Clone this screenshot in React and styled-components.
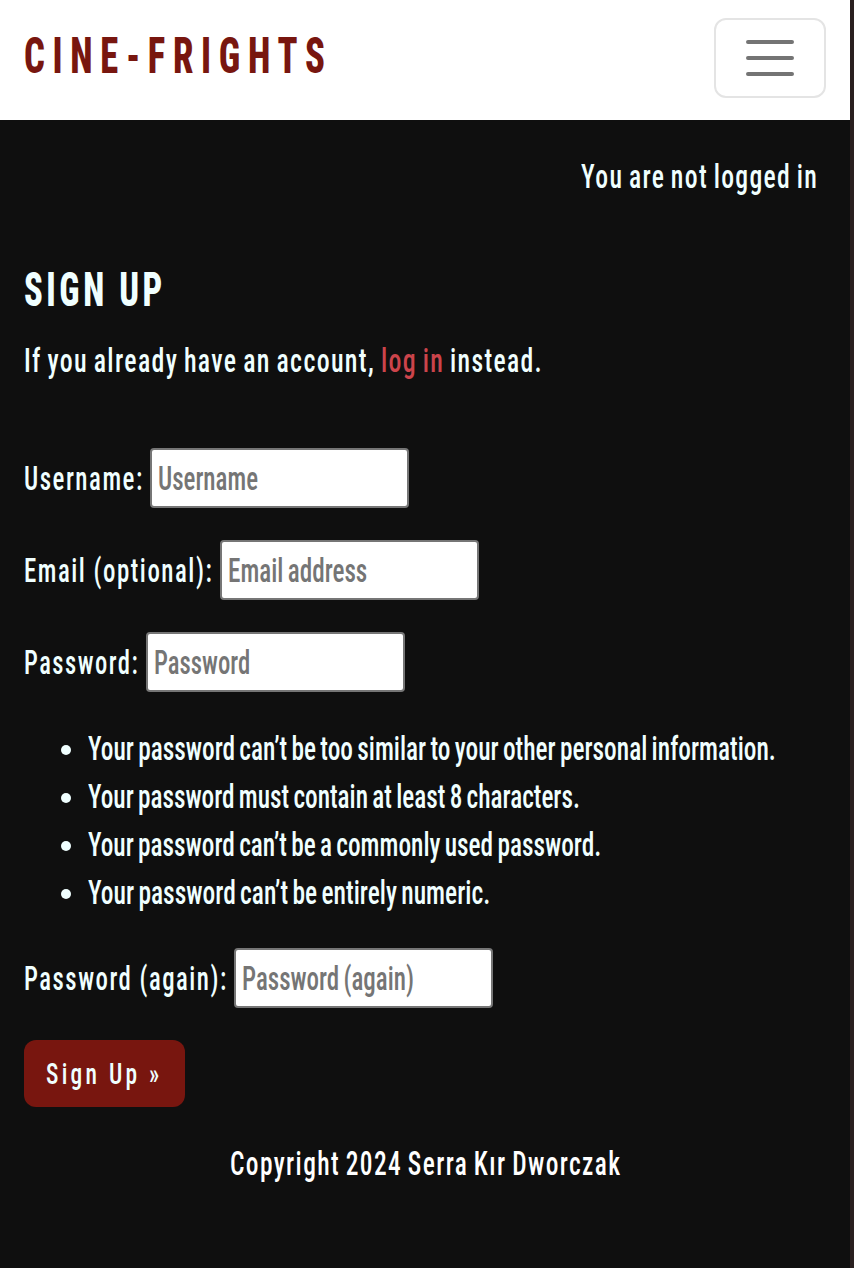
import React, { useLayoutEffect, useRef, useState } from "react";
import styled, { createGlobalStyle } from "styled-components";

const GlobalStyle = createGlobalStyle`
  *, *::before, *::after { box-sizing: border-box; }
  html { background: #2a2020; }
  body {
    margin: 0;
    font-family: Roboto, "Liberation Sans", sans-serif;
    font-size: 33px;
    line-height: 48px;
    color: #f0ffff;
  }
`;

const Page = styled.div`
  width: 850px;
  min-height: 1268px;
  background: #0f0f0f;
  display: flex;
  flex-direction: column;
  overflow: hidden;
`;

const Slot = styled.span`
  display: inline-block;
  white-space: nowrap;
  width: ${(p) => p.$width}px;
  height: 48px;
  vertical-align: top;
`;

const Glyphs = styled.span`
  display: inline-block;
  transform-origin: 0 50%;
  font-stretch: 75%;
  font-weight: ${(p) => p.$weight || 500};
  letter-spacing: ${(p) => p.$spacing || 0}px;
  word-spacing: ${(p) => p.$words || 0}px;
`;

function Condensed({ width, weight, spacing = 0, words = 0, children }) {
  const ref = useRef(null);
  const [scale, setScale] = useState(0.6);
  useLayoutEffect(() => {
    const natural = ref.current.offsetWidth - spacing;
    if (natural > 0) setScale(width / natural);
  }, [width, spacing, words, children]);
  return (
    <Slot $width={width}>
      <Glyphs ref={ref} $weight={weight} $spacing={spacing} $words={words} style={{ transform: `scaleX(${scale})` }}>
        {children}
      </Glyphs>
    </Slot>
  );
}

const Header = styled.header`
  height: 120px;
  padding: 18px 24px 0;
  background: #fff;
  display: flex;
  justify-content: space-between;
  align-items: flex-start;
`;

const Brand = styled.a`
  padding-top: 14px;
  color: #78160f;
  font-size: 50px;
`;

const MenuButton = styled.button`
  width: 112px;
  height: 80px;
  padding: 0;
  border: 2px solid #e4e4e4;
  border-radius: 12px;
  background: #fff;
  display: grid;
  place-items: center;
`;

const Status = styled.p`
  margin: 33px 33px 0 0;
  text-align: right;
`;

const Main = styled.main`
  padding: 0 24px;
`;

const Title = styled.h1`
  margin: 65px 0 0;
  font-size: 49px;
  line-height: 48px;
`;

const Intro = styled.p`
  margin: 23px 0 0;
  display: flex;
  gap: 7px;
`;

const LogInLink = styled.a`
  color: #cc444b;
`;

const Form = styled.form`
  margin-top: 63px;
  display: flex;
  flex-direction: column;
`;

const FieldRow = styled.div`
  display: flex;
  align-items: flex-start;
  gap: 8px;
  height: 60px;
  margin-bottom: ${(p) => p.$after || 32}px;
`;

const Label = styled.label`
  padding-top: 7px;
`;

const FieldBox = styled.div`
  position: relative;
  width: 259px;
  height: 60px;
`;

const Input = styled.input`
  display: block;
  width: 100%;
  height: 100%;
  border: 2px solid #767676;
  border-radius: 4px;
  background: #fff;
`;

const Hint = styled.span`
  position: absolute;
  left: 8px;
  top: 7px;
  color: #757575;
  pointer-events: none;
`;

const Rules = styled.ul`
  margin: 0 0 31px;
  padding: 0;
  list-style: none;
`;

const Rule = styled.li`
  height: 48px;
  padding-left: 37px;
  display: flex;
  align-items: center;
  gap: 17px;
  &::before {
    content: "";
    width: 10px;
    height: 10px;
    margin-top: 2px;
    border-radius: 50%;
    background: #f0ffff;
  }
`;

const Submit = styled.button`
  width: 161px;
  height: 67px;
  padding: 0 0 0 22px;
  border: 0;
  border-radius: 12px;
  background: #78160f;
  color: #f0ffff;
  font: inherit;
  font-size: 30px;
  line-height: 48px;
  text-align: left;
`;

const Footer = styled.footer`
  margin-top: 33px;
  padding-left: 230px;
  color: #fff;
`;

const rules = [
  ["Your password can’t be too similar to your other personal information.", 688],
  ["Your password must contain at least 8 characters.", 492],
  ["Your password can’t be a commonly used password.", 513],
  ["Your password can’t be entirely numeric.", 402],
];

function Field({ id, label, labelWidth, hint, hintWidth, after }) {
  return (
    <FieldRow $after={after}>
      <Label htmlFor={id}><Condensed width={labelWidth} spacing={2}>{label}</Condensed></Label>
      <FieldBox>
        <Input id={id} />
        <Hint><Condensed width={hintWidth} words={-2}>{hint}</Condensed></Hint>
      </FieldBox>
    </FieldRow>
  );
}

export default function App() {
  return (
    <>
      <GlobalStyle />
      <Page>
        <Header>
          <Brand><Condensed width={301} weight={800} spacing={10.5}>CINE-FRIGHTS</Condensed></Brand>
          <MenuButton aria-label="Toggle navigation">
            <svg width="48" height="36" viewBox="0 0 48 36" stroke="#747474" strokeWidth="4" strokeLinecap="round">
              <path d="M2 2H46M2 18H46M2 34H46" />
            </svg>
          </MenuButton>
        </Header>
        <Status><Condensed width={236} spacing={1.7} words={-2}>You are not logged in</Condensed></Status>
        <Main>
          <Title><Condensed width={138} weight={800} spacing={5}>SIGN UP</Condensed></Title>
          <Intro>
            <Condensed width={350} spacing={1.7} words={-2}>If you already have an account,</Condensed>
            <LogInLink><Condensed width={62} spacing={1.7} words={-2}>log in</Condensed></LogInLink>
            <Condensed width={92} spacing={1.7}>instead.</Condensed>
          </Intro>
          <Form>
            <Field id="username" label="Username:" labelWidth={118} hint="Username" hintWidth={100} />
            <Field id="email" label="Email (optional):" labelWidth={188} hint="Email address" hintWidth={139} />
            <Field id="password" label="Password:" labelWidth={114} hint="Password" hintWidth={96} after={33} />
            <Rules>
              {rules.map(([text, width]) => (
                <Rule key={text}><Condensed width={width} words={-2}>{text}</Condensed></Rule>
              ))}
            </Rules>
            <Field id="password-again" label="Password (again):" labelWidth={202} hint="Password (again)" hintWidth={172} />
            <Submit type="button"><Condensed width={113} spacing={4.2}>Sign Up »</Condensed></Submit>
          </Form>
        </Main>
        <Footer><Condensed width={390} spacing={1.8} words={-2}>Copyright 2024 Serra Kır Dworczak</Condensed></Footer>
      </Page>
    </>
  );
}
